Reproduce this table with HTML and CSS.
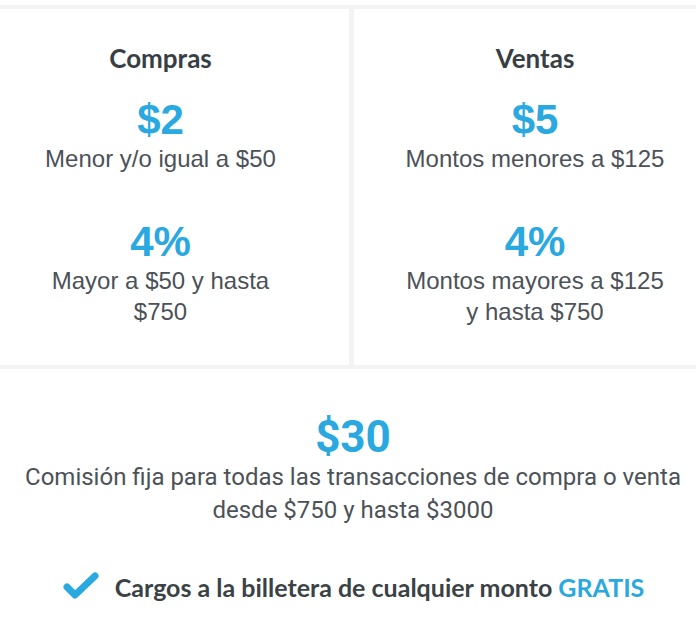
FILE: index.html
```html
<!DOCTYPE html>
<html lang="es">
<head>
<meta charset="utf-8">
<title>Comisiones</title>
<link rel="stylesheet" href="styles.css">
</head>
<body>
<div class="page">
  <div class="board">
    <section class="cell left">
      <h2 class="title">Compras</h2>
      <div class="fee">
        <div class="amount">$2</div>
        <p class="desc">Menor y/o igual a $50</p>
      </div>
      <div class="fee">
        <div class="amount">4%</div>
        <p class="desc">Mayor a $50 y hasta<br>$750</p>
      </div>
    </section>
    <section class="cell right">
      <h2 class="title">Ventas</h2>
      <div class="fee">
        <div class="amount">$5</div>
        <p class="desc">Montos menores a $125</p>
      </div>
      <div class="fee">
        <div class="amount">4%</div>
        <p class="desc">Montos mayores a $125<br>y hasta $750</p>
      </div>
    </section>
    <section class="cell wide">
      <div class="big">$30</div>
      <p class="note">Comisión fija para todas las transacciones de compra o venta<br>desde $750 y hasta $3000</p>
      <div class="free">
        <svg class="check" viewBox="0 0 38 30" width="38" height="30" aria-hidden="true">
          <polyline points="5,15 13,23 33,4" fill="none" stroke="#2aa8e0" stroke-width="7" stroke-linecap="round" stroke-linejoin="round"/>
        </svg>
        <span class="free-text">Cargos a la billetera de cualquier monto <span class="hl">GRATIS</span></span>
      </div>
    </section>
  </div>
</div>
</body>
</html>
```

FILE: styles.css
```css
html, body {
  margin: 0;
  padding: 0;
  background: #ffffff;
}

.page {
  width: 696px;
  height: 620px;
  padding-top: 5px;
  box-sizing: border-box;
  overflow: hidden;
}

.board {
  display: grid;
  grid-template-columns: 349px 1fr;
  grid-template-rows: 356px 1fr;
  column-gap: 5px;
  row-gap: 4px;
  padding-top: 4px;
  background: #f3f3f3;
  height: 615px;
  box-sizing: border-box;
}

.cell {
  background: #ffffff;
  text-align: center;
  padding-top: 34px;
  box-sizing: border-box;
}

.left {
  padding-right: 28px;
}

.right {
  padding-left: 20px;
}

.title {
  margin: 0 0 27px;
  font-family: Lato, "Open Sans", sans-serif;
  font-weight: 700;
  font-size: 26px;
  line-height: 30px;
  color: #383f44;
}

.fee + .fee {
  margin-top: 48px;
}

.amount {
  font-family: "Liberation Sans", Arial, sans-serif;
  font-weight: 700;
  font-size: 42px;
  line-height: 40px;
  color: #2aa8e0;
}

.desc {
  margin: 3px 0 0;
  font-family: "Liberation Sans", Arial, sans-serif;
  font-size: 24px;
  line-height: 31px;
  color: #4c5258;
}

.wide {
  grid-column: 1 / span 2;
  padding-top: 46px;
  padding-left: 10px;
}

.big {
  font-family: Roboto, sans-serif;
  font-weight: 700;
  font-size: 44px;
  line-height: 44px;
  color: #2aa8e0;
}

.note {
  margin: 2px 0 0;
  font-family: Roboto, sans-serif;
  font-size: 24px;
  line-height: 33px;
  color: #4c5258;
}

.free {
  margin-top: 45px;
  display: flex;
  justify-content: center;
  align-items: center;
  gap: 15px;
}

.check {
  display: block;
}

.free-text {
  font-family: Lato, "Open Sans", sans-serif;
  font-weight: 700;
  font-size: 25px;
  line-height: 30px;
  color: #3b4246;
}

.hl {
  color: #2aa8e0;
}
```
